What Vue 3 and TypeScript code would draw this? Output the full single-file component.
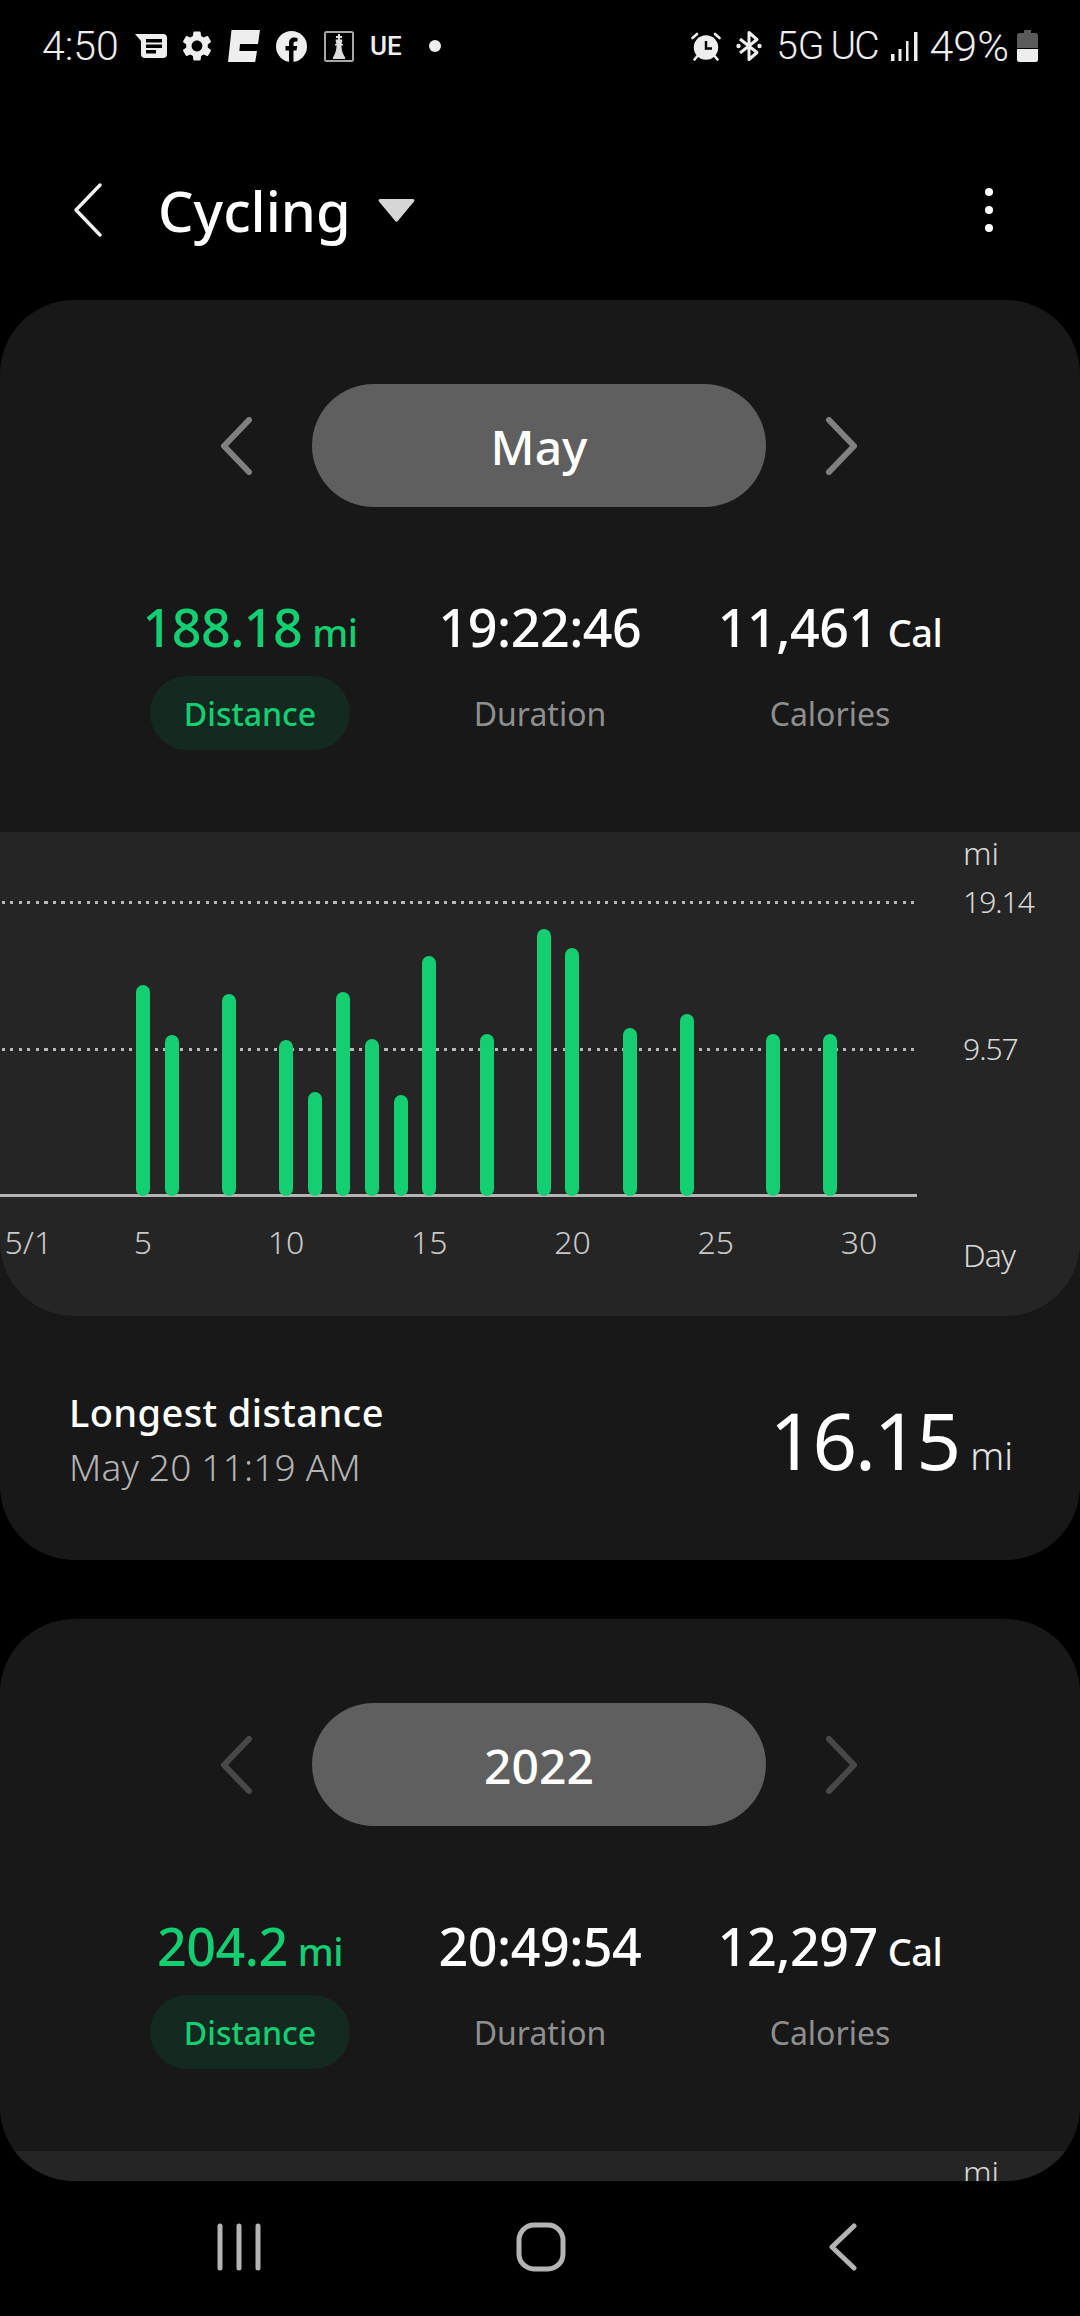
<script setup lang="ts">
interface Stat {
  value: string
  unit?: string
  label: string
  active?: boolean
}

interface Period {
  title: string
  dim: boolean
  stats: Stat[]
  showChart: boolean
}

const periods: Period[] = [
  {
    title: 'May',
    dim: false,
    showChart: true,
    stats: [
      { value: '188.18', unit: 'mi', label: 'Distance', active: true },
      { value: '19:22:46', label: 'Duration' },
      { value: '11,461', unit: 'Cal', label: 'Calories' }
    ]
  },
  {
    title: '2022',
    dim: true,
    showChart: false,
    stats: [
      { value: '204.2', unit: 'mi', label: 'Distance', active: true },
      { value: '20:49:54', label: 'Duration' },
      { value: '12,297', unit: 'Cal', label: 'Calories' }
    ]
  }
]

// miles per day of the month, days without a ride are left out
const rides: Record<number, number> = {
  5: 13.74, 6: 10.49, 8: 13.15, 10: 10.16, 11: 6.77, 12: 13.29, 13: 10.22, 14: 6.58,
  15: 15.63, 17: 10.55, 19: 17.38, 20: 16.15, 22: 10.94, 24: 11.85, 27: 10.55, 29: 10.55
}

const maxMiles = 19.14
const plotHeight = 294
const days = Array.from({ length: 30 }, (_, i) => i + 1)

function barHeight(day: number) {
  return `${(rides[day] / maxMiles) * plotHeight}px`
}

function dayLabel(day: number) {
  if (day === 1) return '5/1'
  return day % 5 === 0 ? String(day) : ''
}
</script>

<template>
  <div class="phone">
    <div class="status">
      <span class="clock">4:50</span>
      <svg class="ic-msg" width="32" height="24" viewBox="0 0 32 24">
        <path fill="#eee" d="M0 0H28a4 4 0 0 1 4 4V20a4 4 0 0 1-4 4H10a4 4 0 0 1-4-4V7Z" />
        <path fill="#000" d="M11 5H27V8.5H11ZM11 10.5H27V14H11ZM11 16H21V19.5H11Z" />
      </svg>
      <svg class="ic-gear" width="30" height="30" viewBox="2.5 2 19 20">
        <path fill="#eee" d="M19.14 12.94c.04-.3.06-.61.06-.94 0-.32-.02-.64-.07-.94l2.03-1.58c.18-.14.23-.41.12-.61l-1.92-3.32c-.12-.22-.37-.29-.59-.22l-2.39.96c-.5-.38-1.03-.7-1.62-.94l-.36-2.54c-.04-.24-.24-.41-.48-.41h-3.84c-.24 0-.43.17-.47.41l-.36 2.54c-.59.24-1.13.57-1.62.94l-2.39-.96c-.22-.08-.47 0-.59.22L2.74 8.87c-.12.21-.08.47.12.61l2.03 1.58c-.05.3-.09.63-.09.94s.02.64.07.94l-2.03 1.58c-.18.14-.23.41-.12.61l1.92 3.32c.12.22.37.29.59.22l2.39-.96c.5.38 1.03.7 1.62.94l.36 2.54c.05.24.24.41.48.41h3.84c.24 0 .44-.17.47-.41l.36-2.54c.59-.24 1.13-.56 1.62-.94l2.39.96c.22.08.47 0 .59-.22l1.92-3.32c.12-.22.07-.47-.12-.61l-2.01-1.58zM12 15.6c-1.98 0-3.6-1.62-3.6-3.6s1.62-3.6 3.6-3.6 3.6 1.62 3.6 3.6-1.62 3.6-3.6 3.6z" />
      </svg>
      <svg class="ic-espn" width="32" height="32" viewBox="0 0 32 32">
        <path fill="#eee" d="M3.5 0H32L30 14H12L11.4 21H29L27.2 32H0Z" />
      </svg>
      <svg class="ic-fb" width="31" height="31" viewBox="0 0 31 31">
        <circle cx="15.5" cy="15.5" r="15.5" fill="#eee" />
        <path fill="#000" d="M13 31V19.5H9.5V15H13V12C13 8.5 15 6.5 18.5 6.5L21.5 7V10.5H19.5C18 10.5 17.5 11.5 17.5 12.8V15H21.2L20.5 19.5H17.5V31Z" />
      </svg>
      <svg class="ic-chess" width="30" height="31" viewBox="0 0 30 31">
        <rect x="1" y="1" width="28" height="29" rx="1.5" fill="none" stroke="#a8a8a8" stroke-width="2" />
        <path fill="#ddd" d="M14 3H16V5H18V7H16V8.5H18.5L17.6 13H19V14.5H17.4C17.6 19 18.5 22 20 24.5V25.5H21V28H9V25.5H10V24.5C11.5 22 12.4 19 12.6 14.5H11V13H12.4L11.5 8.5H14V7H12V5H14Z" />
      </svg>
      <span class="ue">UE</span>
      <span class="dot"></span>
      <span class="spacer"></span>
      <svg class="ic-alarm" width="30" height="29" viewBox="0 0 30 29">
        <path stroke="#eee" stroke-width="2.6" stroke-linecap="round" d="M1.5 6L6 2M28.5 6L24 2M6 24.5L3.5 27.5M24 24.5L26.5 27.5" />
        <circle cx="15" cy="15.5" r="12.2" fill="#eee" />
        <path fill="none" stroke="#000" stroke-width="2.4" d="M15 9V16.5H21" />
      </svg>
      <svg class="ic-bt" width="28" height="32" viewBox="0 0 26 32">
        <path fill="none" stroke="#eee" stroke-width="3" stroke-linejoin="round" d="M4 9L21 22.5L13 29.5V2.5L21 9.5L4 23" />
        <circle cx="2.5" cy="16" r="2.2" fill="#eee" />
        <circle cx="23.5" cy="16" r="2.2" fill="#eee" />
      </svg>
      <span class="net">5G</span>
      <span class="net uc">UC</span>
      <svg class="ic-signal" width="28" height="29" viewBox="0 0 28 29">
        <path fill="#eee" d="M0 22H3.5V29H0ZM7.5 17H10.5V29H7.5ZM15 9H17.5V29H15ZM23 0H26.5V29H23Z" />
      </svg>
      <span class="batt">49%</span>
      <svg class="ic-batt" width="21" height="32" viewBox="0 0 21 32">
        <path fill="#5a5a5a" d="M7 0H14V3H18.5A2.5 2.5 0 0 1 21 5.5V18H0V5.5A2.5 2.5 0 0 1 2.5 3H7Z" />
        <path fill="#eee" d="M0 19H21V29.5A2.5 2.5 0 0 1 18.5 32H2.5A2.5 2.5 0 0 1 0 29.5Z" />
      </svg>
    </div>

    <div class="appbar">
      <svg class="back" width="30" height="54" viewBox="0 0 30 54">
        <path fill="none" stroke="#f2f2f2" stroke-width="3.4" stroke-linecap="round" stroke-linejoin="round" d="M27 2L3 27L27 52" />
      </svg>
      <span class="title">Cycling</span>
      <svg class="caret" width="37" height="23" viewBox="0 0 37 23">
        <path fill="#d6d6d6" d="M2 0H35A1.5 1.5 0 0 1 36 2.5L20 21.8A2 2 0 0 1 17 21.8L1 2.5A1.5 1.5 0 0 1 2 0Z" />
      </svg>
      <span class="spacer"></span>
      <span class="kebab"><i></i><i></i><i></i></span>
    </div>

    <div class="scroller">
      <section v-for="p in periods" :key="p.title" class="card">
        <div class="period">
          <svg class="arrow" :class="{ dim: p.dim }" width="35" height="58" viewBox="0 0 35 58">
            <path d="M29 3L4 29L29 55" />
          </svg>
          <div class="pill"><span>{{ p.title }}</span></div>
          <svg class="arrow" :class="{ dim: p.dim }" width="35" height="58" viewBox="0 0 35 58">
            <path d="M6 3L31 29L6 55" />
          </svg>
        </div>

        <div class="stats">
          <div v-for="s in p.stats" :key="s.label" class="stat" :class="{ active: s.active }">
            <div class="value">{{ s.value }}<small v-if="s.unit">{{ s.unit }}</small></div>
            <div class="label">{{ s.label }}</div>
          </div>
        </div>

        <div class="chart">
          <div class="chart-main">
            <div v-if="p.showChart" class="plot">
              <div class="gridlines">
                <div class="dots"></div>
                <div class="dots"></div>
              </div>
              <div class="bars">
                <div v-for="d in days" :key="d" class="slot">
                  <div v-if="rides[d]" class="bar" :style="{ height: barHeight(d) }"></div>
                </div>
              </div>
            </div>
            <div v-if="p.showChart" class="xlabels">
              <span v-for="d in days" :key="d" class="xlabel">{{ dayLabel(d) }}</span>
            </div>
          </div>
          <div class="yaxis">
            <span class="y-unit">mi</span>
            <template v-if="p.showChart">
              <span class="y-max">19.14</span>
              <span class="y-mid">9.57</span>
              <span class="y-day">Day</span>
            </template>
          </div>
        </div>

        <div v-if="p.showChart" class="record">
          <div>
            <div class="rec-title">Longest distance</div>
            <div class="rec-date">May 20 11:19 AM</div>
          </div>
          <div class="rec-value">16.15<small>mi</small></div>
        </div>
      </section>
    </div>

    <div class="navbar">
      <svg width="46" height="48" viewBox="0 0 46 48">
        <path stroke="#b4b4b4" stroke-width="5" stroke-linecap="round" d="M4 3V45M23 3V45M42 3V45" />
      </svg>
      <svg width="50" height="50" viewBox="0 0 50 50">
        <rect x="3" y="3" width="44" height="44" rx="15" fill="none" stroke="#b4b4b4" stroke-width="5" />
      </svg>
      <svg width="28" height="48" viewBox="0 0 28 48">
        <path fill="none" stroke="#b4b4b4" stroke-width="5" stroke-linecap="round" stroke-linejoin="round" d="M25 3L3 24L25 45" />
      </svg>
    </div>
  </div>
</template>

<style>
html, body {
  background: #000;
}
</style>

<style scoped>
.phone {
  width: 1080px;
  height: 2316px;
  background: #000;
  color: #fff;
  font-family: "Noto Sans", Roboto, sans-serif;
  overflow: hidden;
  display: flex;
  flex-direction: column;
}

.spacer {
  flex: 1;
}

.status {
  height: 92px;
  flex: none;
  display: flex;
  align-items: center;
  padding: 0 42px;
  color: #eee;
  font-family: Roboto, sans-serif;
}
.clock {
  font-size: 41px;
  font-weight: 300;
  width: 93px;
}
.ic-gear { margin-left: 15px; }
.ic-espn { margin-left: 16px; }
.ic-fb { margin-left: 16px; }
.ic-chess { margin-left: 17px; }
.ue {
  margin-left: 16px;
  font-size: 26px;
  font-weight: 500;
  width: 32px;
}
.dot {
  margin-left: 27px;
  width: 12px;
  height: 12px;
  border-radius: 50%;
  background: #eee;
}
.ic-bt { margin-left: 14px; }
.net {
  font-size: 39px;
  font-weight: 300;
  margin-left: 13px;
}
.net.uc {
  margin-left: 6px;
  letter-spacing: -2px;
}
.ic-signal { margin-left: 13px; }
.batt {
  font-size: 43px;
  font-weight: 300;
  margin-left: 11px;
}
.ic-batt { margin-left: 8px; }

.appbar {
  height: 208px;
  flex: none;
  display: flex;
  align-items: center;
  padding: 28px 87px 0 73px;
  box-sizing: border-box;
}
.title {
  margin-left: 55px;
  font-size: 56px;
  font-weight: 500;
}
.caret {
  margin-left: 27px;
}
.kebab {
  display: flex;
  flex-direction: column;
  gap: 10px;
}
.kebab i {
  display: block;
  width: 8px;
  height: 8px;
  border-radius: 50%;
  background: #fff;
}

.scroller {
  height: 1881px;
  flex: none;
  overflow: hidden;
  border-radius: 0 0 74px 74px;
}

.card {
  background: #181818;
  border-radius: 74px;
  margin-bottom: 59px;
  padding-top: 84px;
  overflow: hidden;
}

.period {
  height: 123px;
  display: flex;
  align-items: center;
  justify-content: center;
  gap: 57px;
  padding-right: 2px;
}
.arrow {
  fill: none;
  stroke: #808080;
  stroke-width: 6;
  stroke-linecap: round;
  stroke-linejoin: round;
}
.arrow.dim {
  stroke: #484848;
}
.pill {
  width: 454px;
  height: 123px;
  border-radius: 62px;
  background: #5f5f5f;
  display: flex;
  align-items: center;
  justify-content: center;
  font-size: 48px;
  font-weight: 500;
}
.pill span {
  margin-top: 2px;
}

.stats {
  display: grid;
  grid-template-columns: repeat(3, 1fr);
  padding: 0 105px;
  margin-top: 85px;
  height: 240px;
  align-content: start;
}
.stat {
  display: flex;
  flex-direction: column;
  align-items: center;
}
.value {
  font-size: 52px;
  font-weight: 500;
  height: 70px;
  line-height: 70px;
  letter-spacing: -0.5px;
  white-space: nowrap;
}
.value small {
  font-size: 38px;
  line-height: 1;
  margin-left: 10px;
  letter-spacing: -0.5px;
}
.label {
  margin-top: 14px;
  height: 74px;
  width: 200px;
  border-radius: 37px;
  display: flex;
  align-items: center;
  justify-content: center;
  font-size: 32px;
  color: #8f8f8f;
}
.stat.active .value {
  color: #14cf72;
}
.stat.active .label {
  background: #14291f;
  color: #14cf72;
  font-weight: 500;
}

.chart {
  background: #252525;
  height: 484px;
  border-radius: 0 0 74px 74px;
  display: grid;
  grid-template-columns: 917px 1fr;
}
.chart-main {
  padding-top: 69px;
}
.plot {
  display: grid;
  height: 293px;
  border-bottom: 3px solid #b4b4b4;
}
.gridlines,
.bars {
  grid-area: 1 / 1;
}
.gridlines {
  display: flex;
  flex-direction: column;
  gap: 144px;
}
.dots {
  height: 3px;
  background: repeating-linear-gradient(90deg, #b9b9b9 0 3px, transparent 3px 8.5px);
  background-position: 2px 0;
}
.bars,
.xlabels {
  display: grid;
  grid-template-columns: repeat(30, 28.65px);
  padding-left: 14px;
}
.bars {
  margin-bottom: -2px;
}
.slot {
  display: flex;
  align-items: flex-end;
  justify-content: center;
}
.bar {
  width: 14px;
  border-radius: 7px;
  background: #14cf72;
}
.xlabels {
  margin-top: 23px;
  font-size: 32px;
  font-weight: 300;
  color: #c8c8c8;
}
.xlabel {
  justify-self: center;
  white-space: nowrap;
  line-height: 44px;
  min-height: 44px;
}

.yaxis {
  padding-left: 46px;
  display: flex;
  flex-direction: column;
  font-size: 32px;
  font-weight: 300;
  color: #d8d8d8;
  line-height: 44px;
}
.y-unit { margin-top: -1px; }
.y-max {
  margin-top: 5px;
  font-size: 30px;
  letter-spacing: -1px;
}
.y-mid {
  margin-top: 103px;
  font-size: 30px;
  letter-spacing: -1px;
}
.y-day {
  margin-top: 162px;
  letter-spacing: -1px;
}

.record {
  height: 244px;
  box-sizing: border-box;
  padding: 3px 67px 0 69px;
  display: flex;
  align-items: center;
  justify-content: space-between;
}
.rec-title {
  font-size: 38px;
  font-weight: 500;
  line-height: 52px;
  letter-spacing: 0.4px;
}
.rec-date {
  font-size: 37px;
  font-weight: 300;
  line-height: 52px;
  margin-top: 3px;
  letter-spacing: 0.2px;
  color: #b4b4b4;
}
.rec-value {
  font-size: 78px;
  font-weight: 400;
  letter-spacing: -2px;
  white-space: nowrap;
}
.rec-value small {
  font-size: 38px;
  font-weight: 300;
  letter-spacing: 0;
  margin-left: 11px;
  color: #e4e4e4;
}

.navbar {
  flex: 1;
  display: grid;
  grid-template-columns: repeat(3, 302px);
  padding: 0 0 3px 88px;
  align-items: center;
  justify-items: center;
}
</style>
